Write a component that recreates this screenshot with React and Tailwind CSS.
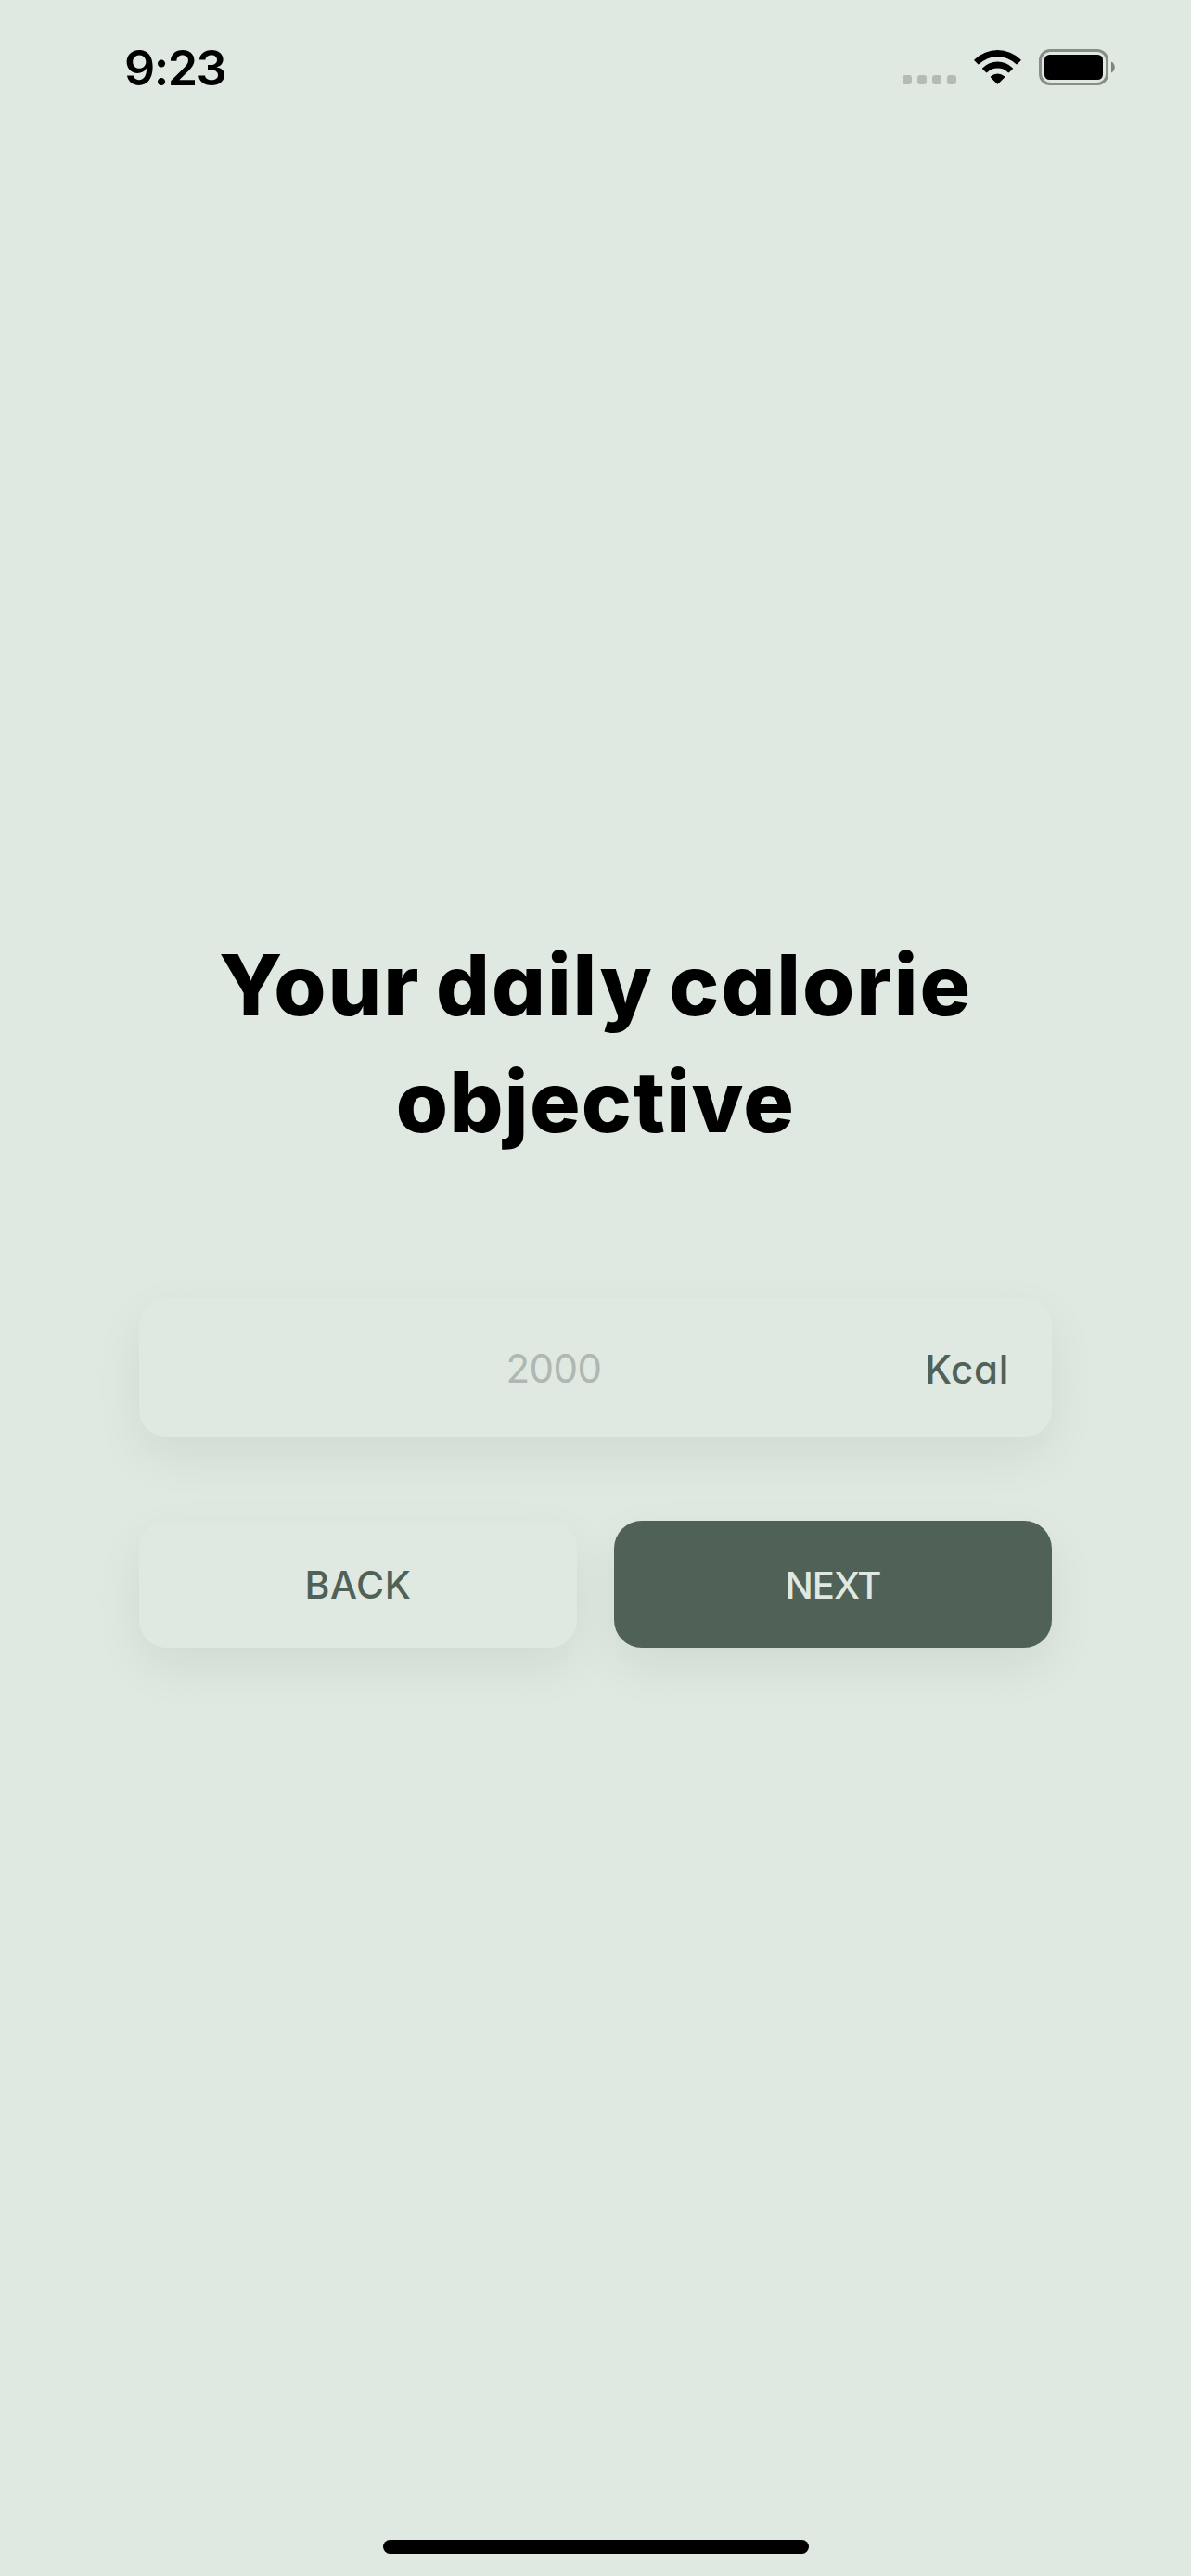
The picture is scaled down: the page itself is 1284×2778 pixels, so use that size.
function StatusBar() {
  return (
    <header className="flex h-[140px] shrink-0 items-start justify-between pt-[53px] pr-[82px] pl-[134px]">
      <span className="mt-px text-[52px] leading-[40px] font-[560] tracking-[-1.6px] text-black">9:23</span>
      <svg width="229" height="40" viewBox="0 0 229 40" fill="none">
        <g fill="#b3bbb4">
          <rect x="0" y="28" width="10" height="10" rx="3" />
          <rect x="16" y="28" width="10" height="10" rx="3" />
          <rect x="32" y="28" width="10" height="10" rx="3" />
          <rect x="48" y="28" width="10" height="10" rx="3" />
        </g>
        <g fill="#000">
          <path d="M77.6 11.200a35.500 35.500 0 0 1 49.800 0q.7.700 0 1.400l-3.500 3.500q-.8.800-1.600 0a28.500 28.500 0 0 0-39.600 0q-.8.800-1.600 0l-3.500-3.500q-.7-.7 0-1.400z" />
          <path d="M86.300 20.200a23 23 0 0 1 32.400 0q.7.700 0 1.400l-3.600 3.500q-.7.700-1.500 0a16 16 0 0 0-22.200 0q-.8.700-1.500 0l-3.600-3.500q-.7-.7 0-1.400z" />
          <path d="M95.200 29.200a11.500 11.500 0 0 1 14.600 0q.8.700 0 1.500l-6.500 6.600q-.8.800-1.600 0l-6.500-6.600q-.8-.8 0-1.500z" />
        </g>
        <rect x="148.500" y="1.500" width="72" height="36" rx="10.500" stroke="#878e88" strokeWidth="3" />
        <rect x="153" y="6" width="63" height="27" rx="5.500" fill="#000" />
        <path d="M225 13.500c5 2 5 10 0 12z" fill="#7e857f" />
      </svg>
    </header>
  );
}

export default function App() {
  return (
    <div className="flex h-[2778px] w-[1284px] flex-col overflow-hidden bg-[#dfe9e1] font-['Inter',sans-serif] [font-feature-settings:'cv11']">
      <StatusBar />
      <main className="flex flex-1 flex-col px-[150px] pt-[859px]">
        <h1 className="text-center text-[91px] leading-[126px] font-extrabold text-black">
          <span className="block tracking-[1.9px] whitespace-nowrap [word-spacing:-5px]">Your daily calorie</span>
          <span className="block tracking-[1.3px] whitespace-nowrap">objective</span>
        </h1>
        <label className="mt-[149px] flex h-[150px] items-center rounded-[30px] bg-[#dfe9e1] pr-[46px] shadow-[0_20px_54px_rgba(0,0,0,0.065)]">
          <input
            type="text"
            placeholder="2000"
            className="ml-[47px] w-[800px] min-w-0 bg-transparent text-center text-[42px] tracking-[-0.5px] outline-none placeholder:text-[#b0b7b1]"
          />
          <span className="mt-[2px] ml-auto text-[42px] font-medium tracking-[0.7px] text-[#506157]">Kcal</span>
        </label>
        <div className="mt-[90px] grid h-[137px] grid-cols-2 gap-[40px]">
          <button className="rounded-[30px] bg-[#dfe9e1] pt-[2px] text-[41px] font-medium tracking-[0.6px] text-[#506157] shadow-[0_20px_54px_rgba(0,0,0,0.065)]">BACK</button>
          <button className="rounded-[30px] bg-[#506157] pt-[2px] text-[40px] font-medium tracking-[-1px] text-[#dfe9e1] shadow-[0_20px_54px_rgba(0,0,0,0.065)]">NEXT</button>
        </div>
      </main>
      <footer className="flex justify-center pb-[24px]">
        <div className="h-[15px] w-[459px] rounded-full bg-black" />
      </footer>
    </div>
  );
}
